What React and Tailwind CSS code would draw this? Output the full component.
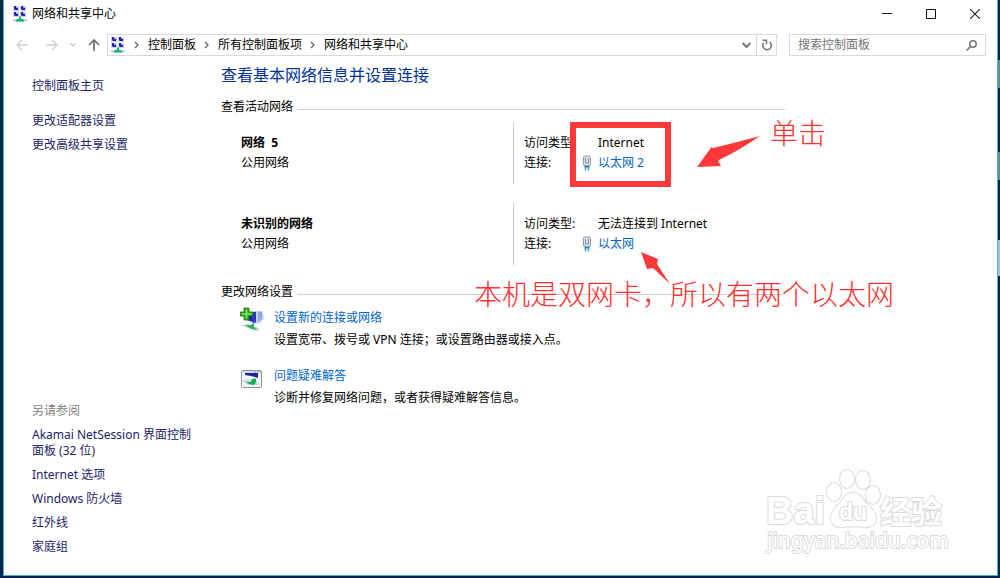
const crumbs = ['控制面板', '所有控制面板项', '网络和共享中心'];

const tasks = ['更改适配器设置', '更改高级共享设置'];

const seeAlso = [
  'Akamai NetSession 界面控制面板 (32 位)',
  'Internet 选项',
  'Windows 防火墙',
  '红外线',
  '家庭组',
];

const networks = [
  { name: '网络  5', kind: '公用网络', access: 'Internet', link: '以太网 2' },
  { name: '未识别的网络', kind: '公用网络', access: '无法连接到 Internet', link: '以太网' },
];

function NetworkIcon() {
  return (
    <svg width="16" height="16" viewBox="0 0 16 16" className="shrink-0" aria-hidden="true">
      {[[1, 0], [8, 0], [1, 6], [8, 6]].map(([x, y]) => (
        <g key={`${x}-${y}`}>
          <rect x={x} y={y} width="6" height="5" fill="#cbd2e8" />
          <path d={`M${x + 1} ${y}h2v1.500l2 .5v2h-3l-1-1z`} fill="#2327b0" />
        </g>
      ))}
      <path d="M1 13h14v2.500H1z" fill="#c9d3d6" />
      <path d="M7 10.500h2v2l3 1.500v1.500H4V14l3-1.500z" fill="#12b76a" />
    </svg>
  );
}

function PlugIcon() {
  return (
    <svg width="10" height="16" viewBox="0 0 10 16" aria-hidden="true">
      <rect x="1.500" y="1" width="7" height="9.500" rx="1.500" fill="#dbe2ea" stroke="#8c99a8" />
      <path d="M3.500 3v5h3V3" fill="none" stroke="#7f8fa1" />
      <path d="M2.500 11h5v1.500h-5z" fill="#4f7d96" />
      <path d="M3.500 12v3.500M6.500 12v3.500" stroke="#2ba3c4" strokeWidth="1.400" />
    </svg>
  );
}

function NewConnectionIcon() {
  return (
    <svg width="24" height="26" viewBox="0 0 24 26" className="shrink-0" aria-hidden="true">
      <path d="M7 5l8-1 8 0 1 8-4 4-6 1-8-4z" fill="#cdd7ea" />
      <path d="M8 8l6-3v10l-7-2z" fill="#191fa6" />
      <path d="M12 5l6 0v8l-3 3-3-1z" fill="#2c37c6" />
      <path d="M18 4.500l4 .5v7l-3 2.500-2-1z" fill="#8fa5e6" />
      <path d="M16 5h2v9l-2 1z" fill="#c4d1f5" />
      <path d="M1 18l7-1 11 4v3l-6-1z" fill="#cbd5d3" />
      <path d="M5 18.500l6-.5 3-2v4l3 3-5-1z" fill="#1fb35c" />
      <path d="M4 1h5v4h4v4H9v4H4V9H0V5h4z" fill="#2ea51c" stroke="#17780f" strokeWidth=".8" />
      <path d="M6.500 2.500v9M1.500 7h10" stroke="#8ee366" strokeWidth="1.600" />
    </svg>
  );
}

function TroubleshootIcon() {
  return (
    <svg width="24" height="24" viewBox="0 0 24 24" className="shrink-0" aria-hidden="true">
      <rect x="1.500" y="5.500" width="20" height="17" rx="1" fill="#f3f5f7" stroke="#8a929c" />
      <path d="M2 6h19v2H2z" fill="#d3d9e1" />
      <path d="M15 7h1M17.500 7h1M20 7h1" stroke="#6d7786" />
      <path d="M5 8h13v5l-3-1-4-1-6-1z" fill="#1b2499" />
      <path d="M3 15l10-1 6 4v2H9l-6-3z" fill="#cfd8dc" />
      <path d="M12 14l4-.5v4l-2 2.500-5-1-3-2h5z" fill="#17ad57" />
    </svg>
  );
}

function TitleBar() {
  return (
    <header className="flex h-7 items-center">
      <div className="flex flex-1 items-center gap-1 pl-2">
        <NetworkIcon />
        <h1>网络和共享中心</h1>
      </div>
      <button aria-label="最小化" className="flex h-7 w-11 items-center justify-center">
        <svg width="10" height="10" viewBox="0 0 10 10" stroke="#222"><path d="M0 4.500h10" /></svg>
      </button>
      <button aria-label="最大化" className="flex h-7 w-11 items-center justify-center">
        <svg width="10" height="10" viewBox="0 0 10 10" fill="none" stroke="#111"><path d="M.5 .5h9v9h-9z" /></svg>
      </button>
      <button aria-label="关闭" className="flex h-7 w-11 items-center justify-center">
        <svg width="10" height="10" viewBox="0 0 10 10" stroke="#222" strokeWidth="1.100"><path d="M0 0l10 10M10 0L0 10" /></svg>
      </button>
    </header>
  );
}

function AddressBar() {
  return (
    <div className="mt-1.5 flex items-center pr-[11px]">
      <nav className="flex h-[22px] w-[103px] shrink-0 items-center pl-3">
        <button aria-label="后退" className="w-[30px]">
          <svg width="12" height="12" viewBox="0 0 12 12" fill="none" stroke="#d0d0d0" strokeWidth="1.400"><path d="M12 6H1M6 1L1 6l5 5" /></svg>
        </button>
        <button aria-label="前进" className="w-6">
          <svg width="12" height="12" viewBox="0 0 12 12" fill="none" stroke="#d0d0d0" strokeWidth="1.400"><path d="M0 6h11M6 1l5 5-5 5" /></svg>
        </button>
        <button aria-label="最近的位置" className="w-[18px]">
          <svg width="6" height="6" viewBox="0 0 6 6" fill="none" stroke="#c8c8c8" strokeWidth="1.400"><path d="M.5 1.500L3 4l2.500-2.500" /></svg>
        </button>
        <button aria-label="向上">
          <svg width="12" height="12" viewBox="0 0 12 12" fill="none" stroke="#6e6e6e" strokeWidth="1.700"><path d="M6 12V1M1 6l5-5 5 5" /></svg>
        </button>
      </nav>
      <div className="flex h-[22px] min-w-0 flex-1 items-center border border-[#d9d9d9] pl-0.5">
        <NetworkIcon />
        {crumbs.map((c) => (
          <span key={c} className="flex items-center whitespace-nowrap">
            <svg width="22" height="8" viewBox="0 0 22 8" fill="none" stroke="#666" strokeWidth="1.300"><path d="M9 1l3 3-3 3" /></svg>
            <a href="#">{c}</a>
          </span>
        ))}
        <button aria-label="展开" className="ml-auto flex h-full w-5 items-center justify-center">
          <svg width="9" height="6" viewBox="0 0 9 6" fill="none" stroke="#6b6b6b" strokeWidth="1.800"><path d="M.5 1l4 4 4-4" /></svg>
        </button>
        <button aria-label="刷新" className="flex h-full w-5 items-center justify-center border-l border-[#d9d9d9]">
          <svg width="12" height="12" viewBox="0 0 12 12" fill="none" stroke="#777" strokeWidth="1.500">
            <path d="M2.600 3.800a4.300 4.300 0 1 0 5.900-1" />
            <path d="M1.500 1.200h4v4" />
          </svg>
        </button>
      </div>
      <label className="ml-3 flex h-[22px] w-[197px] items-center border border-[#d9d9d9] pr-2 pl-2">
        <input
          type="text"
          aria-label="搜索控制面板"
          placeholder="搜索控制面板"
          className="min-w-0 flex-1 bg-transparent outline-none placeholder:text-[#757575]"
        />
        <svg width="11" height="11" viewBox="0 0 11 11" fill="none" stroke="#777" strokeWidth="1.500">
          <circle cx="7" cy="4" r="3.200" />
          <path d="M4.600 6.400L.5 10.500" />
        </svg>
      </label>
    </div>
  );
}

function Sidebar() {
  return (
    <aside className="flex w-[217px] shrink-0 flex-col pt-[22px] pr-6 pb-5 pl-7 text-[#1c2467]">
      <a href="#">控制面板主页</a>
      <ul className="mt-[19px] flex flex-col gap-2">
        {tasks.map((t) => (
          <li key={t}><a href="#">{t}</a></li>
        ))}
      </ul>
      <h2 className="mt-auto text-[#808080]">另请参阅</h2>
      <ul className="mt-2 flex flex-col gap-2">
        {seeAlso.map((t) => (
          <li key={t}><a href="#">{t}</a></li>
        ))}
      </ul>
    </aside>
  );
}

function Legend({ children }) {
  return (
    <h3 className="flex items-center gap-1">
      {children}
      <span className="mt-1 h-px flex-1 bg-[#cdcdcd]" />
    </h3>
  );
}

function Network({ name, kind, access, link }) {
  return (
    <article className="flex pl-5 leading-5">
      <div className="w-[272px] shrink-0 pt-[11px]">
        <h4 className="font-bold whitespace-pre">{name}</h4>
        <p>{kind}</p>
      </div>
      <dl className="grid flex-1 grid-cols-[58px_16px_1fr] content-start border-l border-[#cdcdcd] pt-[11px] pb-[11px] pl-2.5">
        <dt>访问类型:</dt>
        <dd className="col-start-3">{access}</dd>
        <dt>连接:</dt>
        <dd className="col-span-2 flex items-center gap-1.5">
          <PlugIcon />
          <a href="#" className="text-[#0066cc]">{link}</a>
        </dd>
      </dl>
    </article>
  );
}

function Action({ icon, title, text }) {
  return (
    <article className="flex gap-2.5 pl-[19px] leading-[22px]">
      {icon}
      <div>
        <a href="#" className="text-[#0066cc]">{title}</a>
        <p>{text}</p>
      </div>
    </article>
  );
}

// red marker notes laid over the network list
function Notes() {
  return (
    <div className="pointer-events-none absolute top-0 left-0 font-['Noto_Sans_CJK_SC',sans-serif] text-[28px] leading-8 font-light whitespace-nowrap text-[#ff3030]">
      <div className="absolute top-[66px] left-[349px] h-[65px] w-[101px] border-6 border-[#ff3838]" />
      <svg width="66" height="34" viewBox="0 0 66 34" className="absolute top-[79px] left-[475px]" fill="#ff3838">
        <path d="M64 1Q38 8 17 13L15.500 12 1 32l24-1-3-5.500Q42 16 64 1z" />
      </svg>
      <svg width="32" height="34" viewBox="0 0 32 34" className="absolute top-[195px] left-[419px]" fill="#ff3838">
        <path d="M1 1l17 7-1 5 13 20-17-16-6 1z" />
      </svg>
      <p className="absolute top-[60px] left-[549px]">单击</p>
      <p className="absolute top-[221px] left-[253px]">本机是双网卡，所以有两个以太网</p>
    </div>
  );
}

function Watermark() {
  return (
    <svg
      width="192"
      height="90"
      viewBox="0 0 192 90"
      className="pointer-events-none absolute right-10 bottom-[17px]"
      fill="#fff"
      stroke="#dadada"
      strokeWidth="2"
      paintOrder="stroke"
    >
      <text x="1" y="56" fontFamily="Liberation Sans" fontWeight="700" fontSize="38">Bai</text>
      <ellipse cx="69" cy="24" rx="7" ry="9" />
      <ellipse cx="82" cy="11" rx="7" ry="9" />
      <ellipse cx="98" cy="12" rx="7" ry="9" />
      <ellipse cx="108" cy="27" rx="7" ry="9" />
      <path d="M88 25c7 0 9 5 13 10 5 5 10 9 10 15 0 7-6 10-12 9-7-1-15-1-22 0-6 1-11-3-11-9 0-7 5-10 9-15 4-6 7-10 13-10z" />
      <text x="74" y="52" fontFamily="Liberation Sans" fontWeight="700" fontSize="23">du</text>
      <text x="115" y="55" fontFamily="Noto Sans CJK SC" fontWeight="700" fontSize="31">经验</text>
      <text x="2" y="80" fontFamily="Noto Sans" fontSize="21">jingyan.baidu.com</text>
    </svg>
  );
}

export default function App() {
  return (
    <div className="flex min-h-screen bg-[#03264f] pb-0.5 pl-[3px] font-['Noto_Sans','Noto_Sans_CJK_SC',sans-serif] text-xs leading-4 text-black">
      <div className="relative flex min-w-0 flex-1 flex-col border-x border-b border-[#4fb3bd] bg-white">
        <TitleBar />
        <AddressBar />
        <div className="flex flex-1">
          <Sidebar />
          <main className="relative max-w-[564px] flex-1 pt-[7px]">
            <h2 className="text-base leading-6 text-[#003399]">查看基本网络信息并设置连接</h2>
            <section className="mt-3">
              <Legend>查看活动网络</Legend>
              <div className="mt-[7px] flex flex-col gap-[19px]">
                {networks.map((n) => (
                  <Network key={n.name} {...n} />
                ))}
              </div>
            </section>
            <section className="mt-[19px]">
              <Legend>更改网络设置</Legend>
              <div className="mt-[7px] flex flex-col gap-3.5">
                <Action icon={<NewConnectionIcon />} title="设置新的连接或网络" text="设置宽带、拨号或 VPN 连接；或设置路由器或接入点。" />
                <Action icon={<TroubleshootIcon />} title="问题疑难解答" text="诊断并修复网络问题，或者获得疑难解答信息。" />
              </div>
            </section>
            <Notes />
          </main>
        </div>
        <Watermark />
      </div>
      {/* sliver of the desktop behind the window */}
      <div className="flex w-0.5 flex-col">
        <div className="mt-15 h-7 bg-[#6d8798]" />
        <div className="mt-16 h-7 bg-[#6d8798]" />
        <div className="mt-15 h-9 bg-[#a9bdd6]" />
      </div>
    </div>
  );
}
